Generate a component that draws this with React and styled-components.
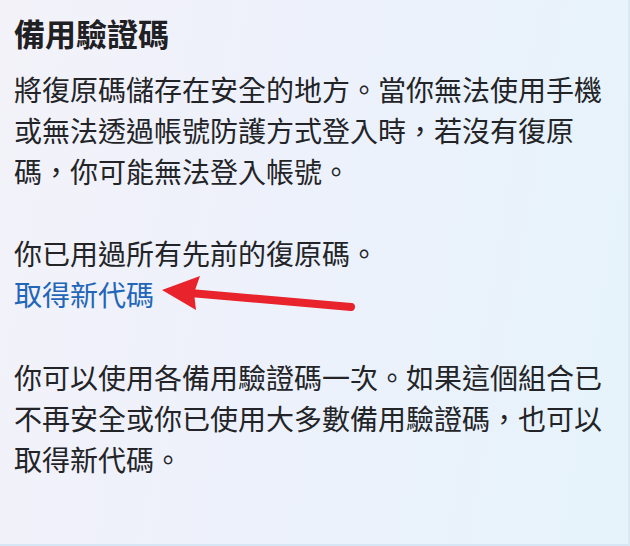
import styled, { createGlobalStyle } from "styled-components";

const GlobalStyle = createGlobalStyle`
  html, body {
    margin: 0;
    padding: 0;
  }
  body {
    font-family: "Noto Sans CJK TC", "Noto Sans", sans-serif;
  }
`;

const Card = styled.div`
  position: relative;
  box-sizing: border-box;
  width: 630px;
  height: 546px;
  padding: 13px 0 0 14px;
  background: linear-gradient(100deg, #f3f2f9 0%, #edf1fb 45%, #e6f3fb 100%);
  border-right: 2px solid #dbe9f5;
  border-bottom: 2px solid #d6e6f4;
  color: #232427;
  overflow: hidden;
`;

const Title = styled.h2`
  margin: 0;
  font-size: 31px;
  line-height: 40px;
  font-weight: 700;
  color: #1f2023;
`;

const Paragraph = styled.p`
  margin: ${(p) => p.$top}px 0 0;
  font-size: 28px;
  line-height: 41px;
  font-weight: 400;
  white-space: nowrap;
`;

const Link = styled.span`
  color: #2166b8;
`;

const Arrow = styled.svg`
  position: absolute;
  left: 150px;
  top: 265px;
`;

export default function App() {
  return (
    <>
      <GlobalStyle />
      <Card>
        <Title>備用驗證碼</Title>
        <Paragraph $top={16}>
          將復原碼儲存在安全的地方。當你無法使用手機
          <br />
          或無法透過帳號防護方式登入時，若沒有復原
          <br />
          碼，你可能無法登入帳號。
        </Paragraph>
        <Paragraph $top={41}>
          你已用過所有先前的復原碼。
          <br />
          <Link>取得新代碼</Link>
        </Paragraph>
        <Paragraph $top={42}>
          你可以使用各備用驗證碼一次。如果這個組合已
          <br />
          不再安全或你已使用大多數備用驗證碼，也可以
          <br />
          取得新代碼。
        </Paragraph>
        <Arrow width="220" height="60" viewBox="0 0 220 60">
          <line
            x1="40"
            y1="28"
            x2="201"
            y2="42"
            stroke="#e8232b"
            strokeWidth="8"
            strokeLinecap="round"
          />
          <polygon points="12,25 50,11 44,28 46,45" fill="#e8232b" />
        </Arrow>
      </Card>
    </>
  );
}
